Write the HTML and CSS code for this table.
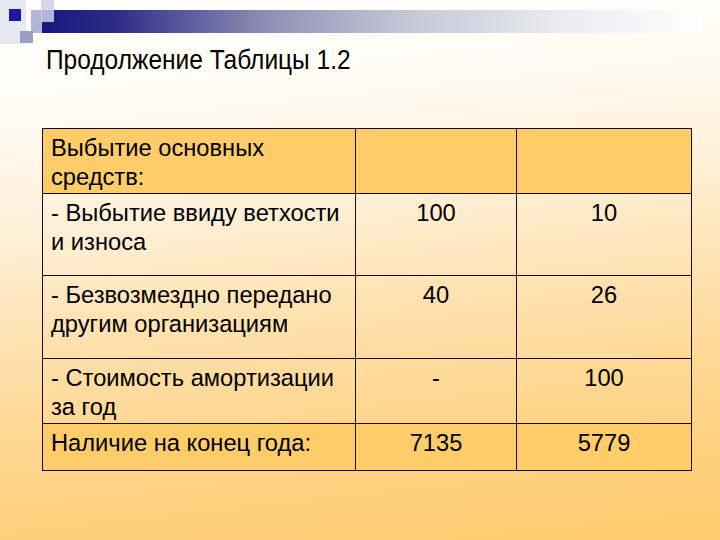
FILE: index.html
```html
<!DOCTYPE html>
<html lang="ru">
<head>
<meta charset="utf-8">
<title>Продолжение Таблицы 1.2</title>
<link rel="stylesheet" href="styles.css">
</head>
<body>
<div class="slide">
  <svg class="deco" width="720" height="45" viewBox="0 0 720 45" xmlns="http://www.w3.org/2000/svg">
    <defs>
      <linearGradient id="bar" x1="0" y1="0" x2="1" y2="0">
        <stop offset="0" stop-color="#16167c"/>
        <stop offset="0.12" stop-color="#2a2a86"/>
        <stop offset="0.35" stop-color="#8e8eb4"/>
        <stop offset="0.55" stop-color="#c4c4d6"/>
        <stop offset="0.8" stop-color="#ececf0"/>
        <stop offset="1" stop-color="#ffffff"/>
      </linearGradient>
    </defs>
    <rect x="0" y="0" width="26" height="44" fill="#e8e8f3"/>
    <rect x="31" y="10" width="670" height="23" fill="url(#bar)"/>
    <rect x="31" y="10" width="11" height="23" fill="#b4b4d6"/>
    <rect x="41" y="0" width="13" height="22" fill="#cfd0e6" opacity="0.85"/>
    <rect x="9" y="9" width="12" height="12" fill="#1a1aa0"/>
    <rect x="20" y="31" width="13" height="12" fill="#9c9cc8"/>
  </svg>
  <h1 class="title"><span class="title-text">Продолжение Таблицы 1.2</span></h1>
  <table class="data">
    <colgroup>
      <col class="c1"><col class="c2"><col class="c3">
    </colgroup>
    <tr class="r1 hl">
      <td>Выбытие основных<br>средств:</td><td></td><td></td>
    </tr>
    <tr class="r2">
      <td>- Выбытие ввиду ветхости<br>и износа</td><td class="num">100</td><td class="num">10</td>
    </tr>
    <tr class="r3">
      <td>- Безвозмездно передано<br>другим организациям</td><td class="num">40</td><td class="num">26</td>
    </tr>
    <tr class="r4">
      <td>- Стоимость амортизации<br>за год</td><td class="num">-</td><td class="num">100</td>
    </tr>
    <tr class="r5 hl">
      <td>Наличие на конец года:</td><td class="num">7135</td><td class="num">5779</td>
    </tr>
  </table>
</div>
</body>
</html>
```
FILE: styles.css
```css
html, body {
  margin: 0;
  padding: 0;
}
body {
  width: 720px;
  height: 540px;
  overflow: hidden;
  font-family: "Liberation Sans", Arial, sans-serif;
  color: #000;
  background: linear-gradient(174deg, #fffefc 0%, #fffbf3 20%, #fef0d8 38%, #fee2b2 55%, #fed58c 75%, #fecc6e 100%);
}
.slide {
  width: 720px;
  height: 540px;
}
.deco {
  display: block;
}
.title {
  margin: 0 0 0 46px;
  font-weight: normal;
  font-size: 28px;
  line-height: 30px;
  height: 83px;
  white-space: nowrap;
}
.title-text {
  display: inline-block;
  transform: scaleX(0.875);
  transform-origin: left center;
}
.data {
  margin-left: 42px;
  border-collapse: collapse;
  table-layout: fixed;
  width: 649px;
  font-size: 23.7px;
  line-height: 29px;
}
.c1 { width: 313px; }
.c2 { width: 161px; }
.c3 { width: 175px; }
.data td {
  border: 1px solid #1a0a00;
  padding: 5px 6px 0 8px;
  vertical-align: top;
  overflow: hidden;
  white-space: nowrap;
}
.data .num {
  text-align: center;
  padding-left: 6px;
}
.hl td {
  background: #fecd6a;
}
.r1 td { height: 59px; }
.r2 td { height: 76px; }
.r3 td { height: 77px; }
.r4 td { height: 59px; }
.r5 td { height: 41px; }
```
